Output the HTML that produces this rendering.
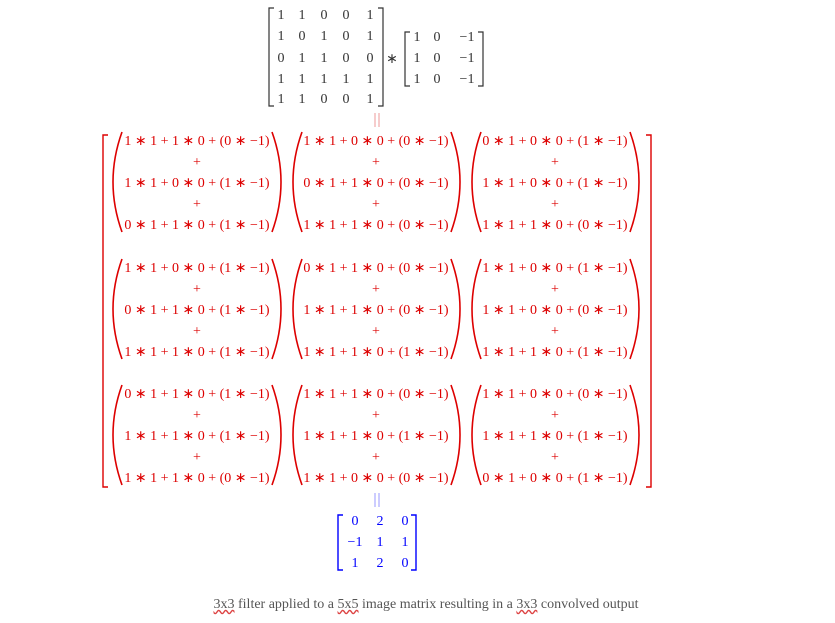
<!DOCTYPE html>
<html><head><meta charset="utf-8"><style>
body{margin:0;width:835px;height:623px;background:#fff;position:relative;overflow:hidden;font-family:"Liberation Serif",serif;}
.a{position:absolute;}
.t{position:absolute;font-size:14px;color:#333;line-height:18px;text-align:center;width:20px;}
.c{position:absolute;width:180px;text-align:center;font-size:14px;line-height:21px;color:#d00;white-space:pre;}
.b{position:absolute;font-size:14px;color:#00f;line-height:18px;text-align:center;width:20px;}
svg{position:absolute;overflow:visible}
</style></head><body>
<svg style="left:0;top:0" width="835" height="623">
<path d="M274,8 H269 V106 H274" fill="none" stroke="#333" stroke-width="1.2"/>
<path d="M378,8 H383 V106 H378" fill="none" stroke="#333" stroke-width="1.2"/>
<path d="M410,32 H405 V86 H410" fill="none" stroke="#333" stroke-width="1.2"/>
<path d="M478,32 H483 V86 H478" fill="none" stroke="#333" stroke-width="1.2"/>
<path d="M375,113 V127 M379,113 V127" stroke="#e99" stroke-width="1"/>
<path d="M375,493 V507 M379,493 V507" stroke="#99f" stroke-width="1"/>
<path d="M108,135 H103 V487 H108" fill="none" stroke="#d00" stroke-width="1.4"/>
<path d="M646,135 H651 V487 H646" fill="none" stroke="#d00" stroke-width="1.4"/>
<path d="M343,515 H338 V570 H343" fill="none" stroke="#00f" stroke-width="1.4"/>
<path d="M411,515 H416 V570 H411" fill="none" stroke="#00f" stroke-width="1.4"/>
<g fill="none" stroke="#d00" stroke-width="1.6">
<path d="M122,132 Q104,182 122,232 M272,132 Q290,182 272,232 M302,132 Q284,182 302,232 M451,132 Q469,182 451,232 M481,132 Q463,182 481,232 M630,132 Q648,182 630,232"/>
<path d="M122,259 Q104,309 122,359 M272,259 Q290,309 272,359 M302,259 Q284,309 302,359 M451,259 Q469,309 451,359 M481,259 Q463,309 481,359 M630,259 Q648,309 630,359"/>
<path d="M122,385 Q104,435 122,485 M272,385 Q290,435 272,485 M302,385 Q284,435 302,485 M451,385 Q469,435 451,485 M481,385 Q463,435 481,485 M630,385 Q648,435 630,485"/>
</g>
</svg>
<div class="t" style="left:271px;top:7px">1</div><div class="t" style="left:292px;top:7px">1</div><div class="t" style="left:314px;top:7px">0</div><div class="t" style="left:336px;top:7px">0</div><div class="t" style="left:360px;top:7px">1</div>
<div class="t" style="left:271px;top:28px">1</div><div class="t" style="left:292px;top:28px">0</div><div class="t" style="left:314px;top:28px">1</div><div class="t" style="left:336px;top:28px">0</div><div class="t" style="left:360px;top:28px">1</div>
<div class="t" style="left:271px;top:50px">0</div><div class="t" style="left:292px;top:50px">1</div><div class="t" style="left:314px;top:50px">1</div><div class="t" style="left:336px;top:50px">0</div><div class="t" style="left:360px;top:50px">0</div>
<div class="t" style="left:271px;top:71px">1</div><div class="t" style="left:292px;top:71px">1</div><div class="t" style="left:314px;top:71px">1</div><div class="t" style="left:336px;top:71px">1</div><div class="t" style="left:360px;top:71px">1</div>
<div class="t" style="left:271px;top:91px">1</div><div class="t" style="left:292px;top:91px">1</div><div class="t" style="left:314px;top:91px">0</div><div class="t" style="left:336px;top:91px">0</div><div class="t" style="left:360px;top:91px">1</div>
<div class="t" style="left:382px;top:51px">∗</div>
<div class="t" style="left:407px;top:29px">1</div><div class="t" style="left:427px;top:29px">0</div><div class="t" style="left:452px;top:29px;width:30px">−1</div>
<div class="t" style="left:407px;top:50px">1</div><div class="t" style="left:427px;top:50px">0</div><div class="t" style="left:452px;top:50px;width:30px">−1</div>
<div class="t" style="left:407px;top:71px">1</div><div class="t" style="left:427px;top:71px">0</div><div class="t" style="left:452px;top:71px;width:30px">−1</div>

<div class="c" style="left:107px;top:131px">1 ∗ 1 + 1 ∗ 0 + (0 ∗ −1)
+
1 ∗ 1 + 0 ∗ 0 + (1 ∗ −1)
+
0 ∗ 1 + 1 ∗ 0 + (1 ∗ −1)</div>
<div class="c" style="left:286px;top:131px">1 ∗ 1 + 0 ∗ 0 + (0 ∗ −1)
+
0 ∗ 1 + 1 ∗ 0 + (0 ∗ −1)
+
1 ∗ 1 + 1 ∗ 0 + (0 ∗ −1)</div>
<div class="c" style="left:465px;top:131px">0 ∗ 1 + 0 ∗ 0 + (1 ∗ −1)
+
1 ∗ 1 + 0 ∗ 0 + (1 ∗ −1)
+
1 ∗ 1 + 1 ∗ 0 + (0 ∗ −1)</div>

<div class="c" style="left:107px;top:258px">1 ∗ 1 + 0 ∗ 0 + (1 ∗ −1)
+
0 ∗ 1 + 1 ∗ 0 + (1 ∗ −1)
+
1 ∗ 1 + 1 ∗ 0 + (1 ∗ −1)</div>
<div class="c" style="left:286px;top:258px">0 ∗ 1 + 1 ∗ 0 + (0 ∗ −1)
+
1 ∗ 1 + 1 ∗ 0 + (0 ∗ −1)
+
1 ∗ 1 + 1 ∗ 0 + (1 ∗ −1)</div>
<div class="c" style="left:465px;top:258px">1 ∗ 1 + 0 ∗ 0 + (1 ∗ −1)
+
1 ∗ 1 + 0 ∗ 0 + (0 ∗ −1)
+
1 ∗ 1 + 1 ∗ 0 + (1 ∗ −1)</div>

<div class="c" style="left:107px;top:384px">0 ∗ 1 + 1 ∗ 0 + (1 ∗ −1)
+
1 ∗ 1 + 1 ∗ 0 + (1 ∗ −1)
+
1 ∗ 1 + 1 ∗ 0 + (0 ∗ −1)</div>
<div class="c" style="left:286px;top:384px">1 ∗ 1 + 1 ∗ 0 + (0 ∗ −1)
+
1 ∗ 1 + 1 ∗ 0 + (1 ∗ −1)
+
1 ∗ 1 + 0 ∗ 0 + (0 ∗ −1)</div>
<div class="c" style="left:465px;top:384px">1 ∗ 1 + 0 ∗ 0 + (0 ∗ −1)
+
1 ∗ 1 + 1 ∗ 0 + (1 ∗ −1)
+
0 ∗ 1 + 0 ∗ 0 + (1 ∗ −1)</div>

<div class="b" style="left:345px;top:513px">0</div><div class="b" style="left:370px;top:513px">2</div><div class="b" style="left:395px;top:513px">0</div>
<div class="b" style="left:340px;top:534px;width:30px">−1</div><div class="b" style="left:370px;top:534px">1</div><div class="b" style="left:395px;top:534px">1</div>
<div class="b" style="left:345px;top:555px">1</div><div class="b" style="left:370px;top:555px">2</div><div class="b" style="left:395px;top:555px">0</div>

<div class="a" style="left:0;width:852px;top:596px;text-align:center;font-size:14px;color:#555;line-height:18px;"><span style="text-decoration:underline wavy #d44">3x3</span> filter applied to a <span style="text-decoration:underline wavy #d44">5x5</span> image matrix resulting in a <span style="text-decoration:underline wavy #d44">3x3</span> convolved output</div>
</body></html>
